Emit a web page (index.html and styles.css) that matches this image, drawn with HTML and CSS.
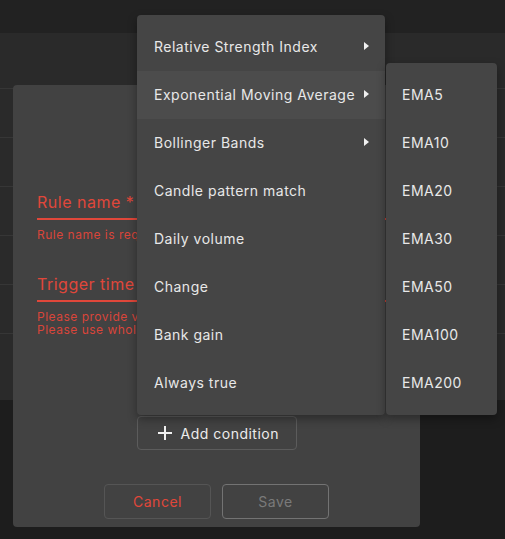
FILE: index.html
```html
<!DOCTYPE html>
<html lang="en">
<head>
<meta charset="utf-8">
<title>Rule editor</title>
<link rel="stylesheet" href="styles.css">
</head>
<body>
<div class="page">
  <header class="topbar"></header>
  <div class="table">
    <div class="row first"></div>
    <div class="row"></div>
    <div class="row"></div>
    <div class="row"></div>
    <div class="row"></div>
    <div class="row"></div>
  </div>
</div>

<div class="dialog">
  <div class="field">
    <div class="label">Rule name *</div>
    <div class="underline"></div>
    <div class="helper">Rule name is required</div>
  </div>
  <div class="field second">
    <div class="label">Trigger time</div>
    <div class="underline"></div>
    <div class="helper">Please provide valid trigger time<br>Please use whole numbers</div>
  </div>
  <button class="add-btn">
    <svg class="plus" width="14" height="14" viewBox="0 0 14 14"><path d="M7 0v14M0 7h14" stroke="#f0f0f0" stroke-width="2" fill="none"/></svg>
    <span>Add condition</span>
  </button>
  <div class="actions">
    <button class="btn cancel">Cancel</button>
    <button class="btn save">Save</button>
  </div>
</div>

<ul class="menu">
  <li class="item">Relative Strength Index<span class="arrow"></span></li>
  <li class="item active">Exponential Moving Average<span class="arrow"></span></li>
  <li class="item">Bollinger Bands<span class="arrow"></span></li>
  <li class="item">Candle pattern match</li>
  <li class="item">Daily volume</li>
  <li class="item">Change</li>
  <li class="item">Bank gain</li>
  <li class="item">Always true</li>
</ul>

<ul class="menu submenu">
  <li class="item">EMA5</li>
  <li class="item">EMA10</li>
  <li class="item">EMA20</li>
  <li class="item">EMA30</li>
  <li class="item">EMA50</li>
  <li class="item">EMA100</li>
  <li class="item">EMA200</li>
</ul>
</body>
</html>
```

FILE: styles.css
```css
* { box-sizing: border-box; }
html, body { margin: 0; padding: 0; }
body {
  width: 505px;
  height: 539px;
  overflow: hidden;
  background: #1d1d1d;
  font-family: Inter, "Open Sans", sans-serif;
  letter-spacing: 0.5px;
  position: relative;
}
.page { display: flex; flex-direction: column; }
.topbar { height: 33px; background: #222222; }
.table { height: 367px; background: #2a2a2a; display: flex; flex-direction: column; }
.row { height: 49px; border-bottom: 1px solid #363636; }
.row.first { height: 56px; }

.dialog {
  position: absolute;
  left: 13px;
  top: 85px;
  width: 407px;
  height: 442px;
  background: #424242;
  border-radius: 4px;
  padding: 107px 24px 8px;
  display: flex;
  flex-direction: column;
}
.field { display: flex; flex-direction: column; }
.field.second { margin-top: 32px; }
.label { font-size: 16px; line-height: 20px; color: #e0473a; }
.underline { margin-top: 6px; height: 2px; background: #e0473a; }
.helper { margin-top: 8px; font-size: 12px; line-height: 13px; color: #d9453a; }
.field:first-child .helper { line-height: 14px; }

.add-btn {
  align-self: center;
  margin-top: 80px;
  width: 160px;
  height: 35px;
  background: transparent;
  border: 1px solid #5c5c5c;
  border-radius: 4px;
  display: flex;
  align-items: center;
  padding: 0 0 0 20px;
  gap: 9px;
  font-family: inherit;
  letter-spacing: inherit;
  font-size: 14px;
  color: #ececec;
}
.actions { margin-top: 34px; display: flex; justify-content: center; gap: 11px; }
.btn {
  width: 107px;
  height: 35px;
  background: transparent;
  border-radius: 4px;
  font-family: inherit;
  letter-spacing: inherit;
  font-size: 14px;
}
.cancel { border: 1px solid #555555; color: #e0473a; }
.save { border: 1px solid #737373; color: #7a7a7a; }

.menu {
  position: absolute;
  left: 137px;
  top: 15px;
  width: 248px;
  margin: 0;
  padding: 8px 0;
  list-style: none;
  background: #454545;
  border-radius: 4px;
  box-shadow: 0 4px 10px rgba(0,0,0,0.35);
}
.submenu { left: 386px; top: 63px; width: 111px; }
.item {
  height: 48px;
  display: flex;
  align-items: center;
  justify-content: space-between;
  padding: 0 16px 2px 17px;
  font-size: 14px;
  color: #e8e8e8;
}
.submenu .item { padding-left: 16px; }
.item.active { background: #4c4c4c; }
.arrow {
  width: 0;
  height: 0;
  border-top: 4.5px solid transparent;
  border-bottom: 4.5px solid transparent;
  border-left: 5px solid #f0f0f0;
}
```
